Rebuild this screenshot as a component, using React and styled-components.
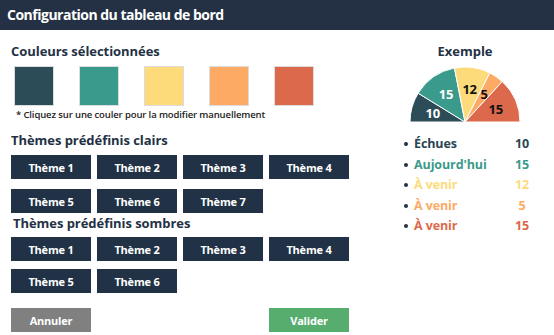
import React from 'react';
import styled, { createGlobalStyle } from 'styled-components';

const Global = createGlobalStyle`
  html, body { margin: 0; padding: 0; background: #fff; }
  body { font-family: "Open Sans", "Liberation Sans", sans-serif; }
  * { box-sizing: border-box; }
`;

const NAVY = '#243145';
const COLORS = ['#2c4d57', '#3a9a8b', '#fddb7b', '#fdaa65', '#dd694c'];

const Panel = styled.div`
  width: 554px;
  height: 335px;
  background: #fff;
  overflow: hidden;
`;

const Header = styled.div`
  height: 30px;
  background: ${NAVY};
  color: #fff;
  font-size: 14px;
  font-weight: 700;
  letter-spacing: -0.5px;
  line-height: 30px;
  padding-left: 7px;
`;

const Body = styled.div`
  display: flex;
`;

const Left = styled.div`
  width: 376px;
  padding-left: 11px;
  display: flex;
  flex-direction: column;
`;

const Title = styled.div`
  color: ${NAVY};
  font-size: 13px;
  font-weight: 700;
  letter-spacing: -0.05px;
  line-height: 18px;
  margin-top: ${p => p.$top}px;
  padding-left: ${p => p.$indent || 0}px;
`;

const Swatches = styled.div`
  display: flex;
  gap: 25px;
  margin-top: 6px;
  padding-left: 3px;
`;

const Swatch = styled.div`
  width: 40px;
  height: 40px;
  background: ${p => p.$color};
  border: 1px solid #dcdcdc;
`;

const Note = styled.div`
  font-size: 9.5px;
  font-weight: 600;
  letter-spacing: -0.12px;
  color: #222;
  line-height: 13px;
  margin-top: 2px;
  padding-left: 5px;
`;

const Grid = styled.div`
  display: grid;
  grid-template-columns: repeat(4, 80px);
  column-gap: 6px;
  row-gap: ${p => p.$rowGap}px;
  margin-top: ${p => p.$top}px;
`;

const Button = styled.div`
  height: 24px;
  width: 80px;
  background: ${p => p.$bg || '#223246'};
  color: #fff;
  font-size: 11px;
  font-weight: 700;
  letter-spacing: -0.2px;
  display: flex;
  align-items: center;
  justify-content: center;
`;

const Actions = styled.div`
  display: flex;
  justify-content: space-between;
  width: 338px;
  margin-top: 15px;
`;

const Right = styled.div`
  width: 178px;
  display: flex;
  flex-direction: column;
  align-items: center;
`;

const ChartTitle = styled.div`
  color: ${NAVY};
  font-size: 13px;
  font-weight: 700;
  line-height: 18px;
  margin-top: 12px;
`;

const Chart = styled.svg`
  display: block;
  margin-top: 6px;
`;

const Legend = styled.div`
  display: grid;
  grid-template-columns: 10px 96px 24px;
  row-gap: 2.5px;
  margin-top: 12px;
  margin-left: 8px;
`;

const Row = styled.div`
  display: contents;
  color: ${p => p.$color};
  font-size: 12.5px;
  font-weight: 700;
  letter-spacing: -0.1px;
`;

const Dot = styled.span`
  align-self: center;
  width: 4px;
  height: 4px;
  border-radius: 50%;
  background: ${NAVY};
`;

const Label = styled.span`
  line-height: 18px;
`;

const Value = styled.span`
  line-height: 18px;
  text-align: center;
`;

const data = [
  { label: 'Échues', value: 10 },
  { label: "Aujourd'hui", value: 15 },
  { label: 'À venir', value: 12 },
  { label: 'À venir', value: 5 },
  { label: 'À venir', value: 15 },
];

const HalfPie = () => {
  const cx = 60, cy = 56, r = 55, lr = 33.5;
  const total = data.reduce((s, d) => s + d.value, 0);
  const pt = (a, rad) => [cx - rad * Math.cos(a), cy - rad * Math.sin(a)];
  let acc = 0;
  const parts = data.map((d, i) => {
    const a0 = (acc / total) * Math.PI;
    acc += d.value;
    const a1 = (acc / total) * Math.PI;
    const [x0, y0] = pt(a0, r);
    const [x1, y1] = pt(a1, r);
    const [tx, ty] = pt((a0 + a1) / 2, lr);
    return (
      <g key={i}>
        <path
          d={`M${cx} ${cy} L${x0} ${y0} A${r} ${r} 0 0 1 ${x1} ${y1} Z`}
          fill={COLORS[i]}
          stroke="#fff"
          strokeWidth="1"
        />
        <text
          x={tx}
          y={ty}
          textAnchor="middle"
          dominantBaseline="central"
          fontSize="13"
          fontWeight="700"
          letterSpacing="-0.3"
          fill={i < 2 ? '#fff' : '#111'}
        >
          {d.value}
        </text>
      </g>
    );
  });
  return (
    <Chart width="120" height="57" viewBox="0 0 120 57">
      {parts}
    </Chart>
  );
};

export default function App() {
  return (
    <Panel>
      <Global />
      <Header>Configuration du tableau de bord</Header>
      <Body>
        <Left>
          <Title $top={12}>Couleurs sélectionnées</Title>
          <Swatches>
            {COLORS.map(c => <Swatch key={c} $color={c} />)}
          </Swatches>
          <Note>* Cliquez sur une couler pour la modifier manuellement</Note>
          <Title $top={10}>Thèmes prédéfinis clairs</Title>
          <Grid $top={6} $rowGap={10}>
            {[1, 2, 3, 4, 5, 6, 7].map(n => <Button key={n}>Thème {n}</Button>)}
          </Grid>
          <Title $top={1} $indent={2}>Thèmes prédéfinis sombres</Title>
          <Grid $top={5} $rowGap={8}>
            {[1, 2, 3, 4, 5, 6].map(n => <Button key={n}>Thème {n}</Button>)}
          </Grid>
          <Actions>
            <Button $bg="#808080">Annuler</Button>
            <Button $bg="#57ad6e">Valider</Button>
          </Actions>
        </Left>
        <Right>
          <ChartTitle>Exemple</ChartTitle>
          <HalfPie />
          <Legend>
            {data.map((d, i) => (
              <Row key={i} $color={i === 0 ? '#2a4452' : COLORS[i]}>
                <Dot />
                <Label>{d.label}</Label>
                <Value>{d.value}</Value>
              </Row>
            ))}
          </Legend>
        </Right>
      </Body>
    </Panel>
  );
}
